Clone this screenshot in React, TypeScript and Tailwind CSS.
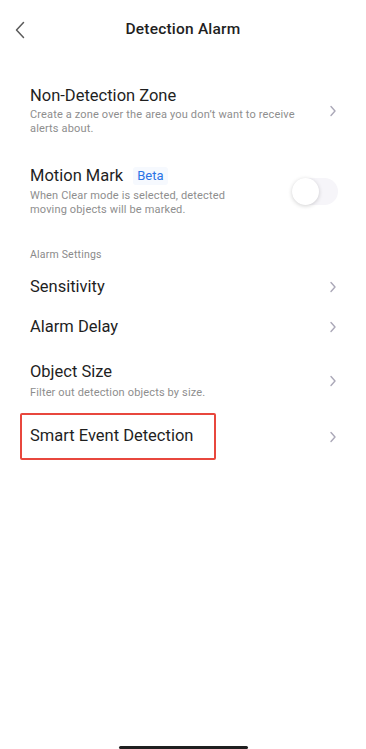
import React from 'react';

const Chevron = () => (
  <svg width="8" height="12" viewBox="0 0 8 12" fill="none" className="shrink-0">
    <polyline
      points="2,1.5 6,6 2,10.5"
      stroke="#aba8b8"
      strokeWidth="1.4"
      strokeLinecap="round"
      strokeLinejoin="round"
    />
  </svg>
);

const Sub = ({ lines, className = '' }: { lines: string[]; className?: string }) => (
  <div className={`text-[11px] leading-[14px] tracking-[0.15px] whitespace-nowrap text-[#8e8e8e] ${className}`}>
    {lines.map((l) => (
      <div key={l}>{l}</div>
    ))}
  </div>
);

const App = () => {
  return (
    <div
      className="relative h-[749px] w-[366px] overflow-hidden bg-white"
      style={{ fontFamily: 'Roboto, "Noto Sans", sans-serif' }}
    >
      {/* Header */}
      <div className="relative flex h-[60px] items-center justify-center">
        <svg
          width="12"
          height="18"
          viewBox="0 0 12 18"
          fill="none"
          className="absolute top-[21px] left-[14px]"
        >
          <polyline
            points="9.5,1.5 2.5,9 9.5,16.5"
            stroke="#5a5a5a"
            strokeWidth="1.5"
            strokeLinecap="round"
            strokeLinejoin="round"
          />
        </svg>
        <h1 className="text-[15.5px] font-medium tracking-[0.2px] text-[#1f1f1f]">Detection Alarm</h1>
      </div>

      <div className="pr-[29px] pl-[30px]">
        {/* Non-Detection Zone */}
        <div className="mt-[26px] flex items-center justify-between">
          <div>
            <div className="text-[16.5px] leading-[20px] text-[#1f1f1f]">Non-Detection Zone</div>
            <Sub
              className="mt-[2px] leading-[13.5px]"
              lines={['Create a zone over the area you don\u2019t want to receive', 'alerts about.']}
            />
          </div>
          <Chevron />
        </div>

        {/* Motion Mark */}
        <div className="mt-[30px] flex items-center justify-between">
          <div>
            <div className="flex items-center text-[16.5px] leading-[20px] text-[#1f1f1f]">
              Motion Mark
              <span className="ml-[10px] rounded-[3px] bg-[#f6f9fe] px-[4px] text-[13px] leading-[18px] text-[#2a74e6]">
                Beta
              </span>
            </div>
            <Sub
              className="mt-[3px]"
              lines={['When Clear mode is selected, detected', 'moving objects will be marked.']}
            />
          </div>
          <div className="mr-[-1px] flex h-[27px] w-[46px] items-center rounded-full bg-[#f6f5f9]">
            <div className="h-[27px] w-[27px] rounded-full bg-white shadow-[0_1px_4px_rgba(0,0,0,0.18)]" />
          </div>
        </div>

        {/* Alarm Settings */}
        <div className="mt-[31px] text-[10.5px] leading-[14px] tracking-[0.2px] text-[#8a8a8a]">
          Alarm Settings
        </div>

        <div className="mt-[15px] flex items-center justify-between">
          <div className="text-[16.5px] leading-[20px] text-[#1f1f1f]">Sensitivity</div>
          <Chevron />
        </div>

        <div className="mt-[20px] flex items-center justify-between">
          <div className="text-[16.5px] leading-[20px] text-[#1f1f1f]">Alarm Delay</div>
          <Chevron />
        </div>

        <div className="mt-[25px] flex items-center justify-between">
          <div>
            <div className="text-[16.5px] leading-[20px] text-[#1f1f1f]">Object Size</div>
            <Sub className="mt-[4px]" lines={['Filter out detection objects by size.']} />
          </div>
          <Chevron />
        </div>

        {/* Smart Event Detection, highlighted */}
        <div className="mt-[13px] flex items-center justify-between">
          <div className="ml-[-10px] flex h-[47px] w-[196px] items-center rounded-[2px] border-2 border-[#e8473d] pb-[2px] pl-[8px]">
            <div className="text-[16.5px] leading-[20px] text-[#1f1f1f]">Smart Event Detection</div>
          </div>
          <Chevron />
        </div>
      </div>

      {/* Home indicator */}
      <div className="absolute bottom-0 left-[119px] h-[3px] w-[129px] rounded-full bg-[#1f1f1f]" />
    </div>
  );
};

export default App;
